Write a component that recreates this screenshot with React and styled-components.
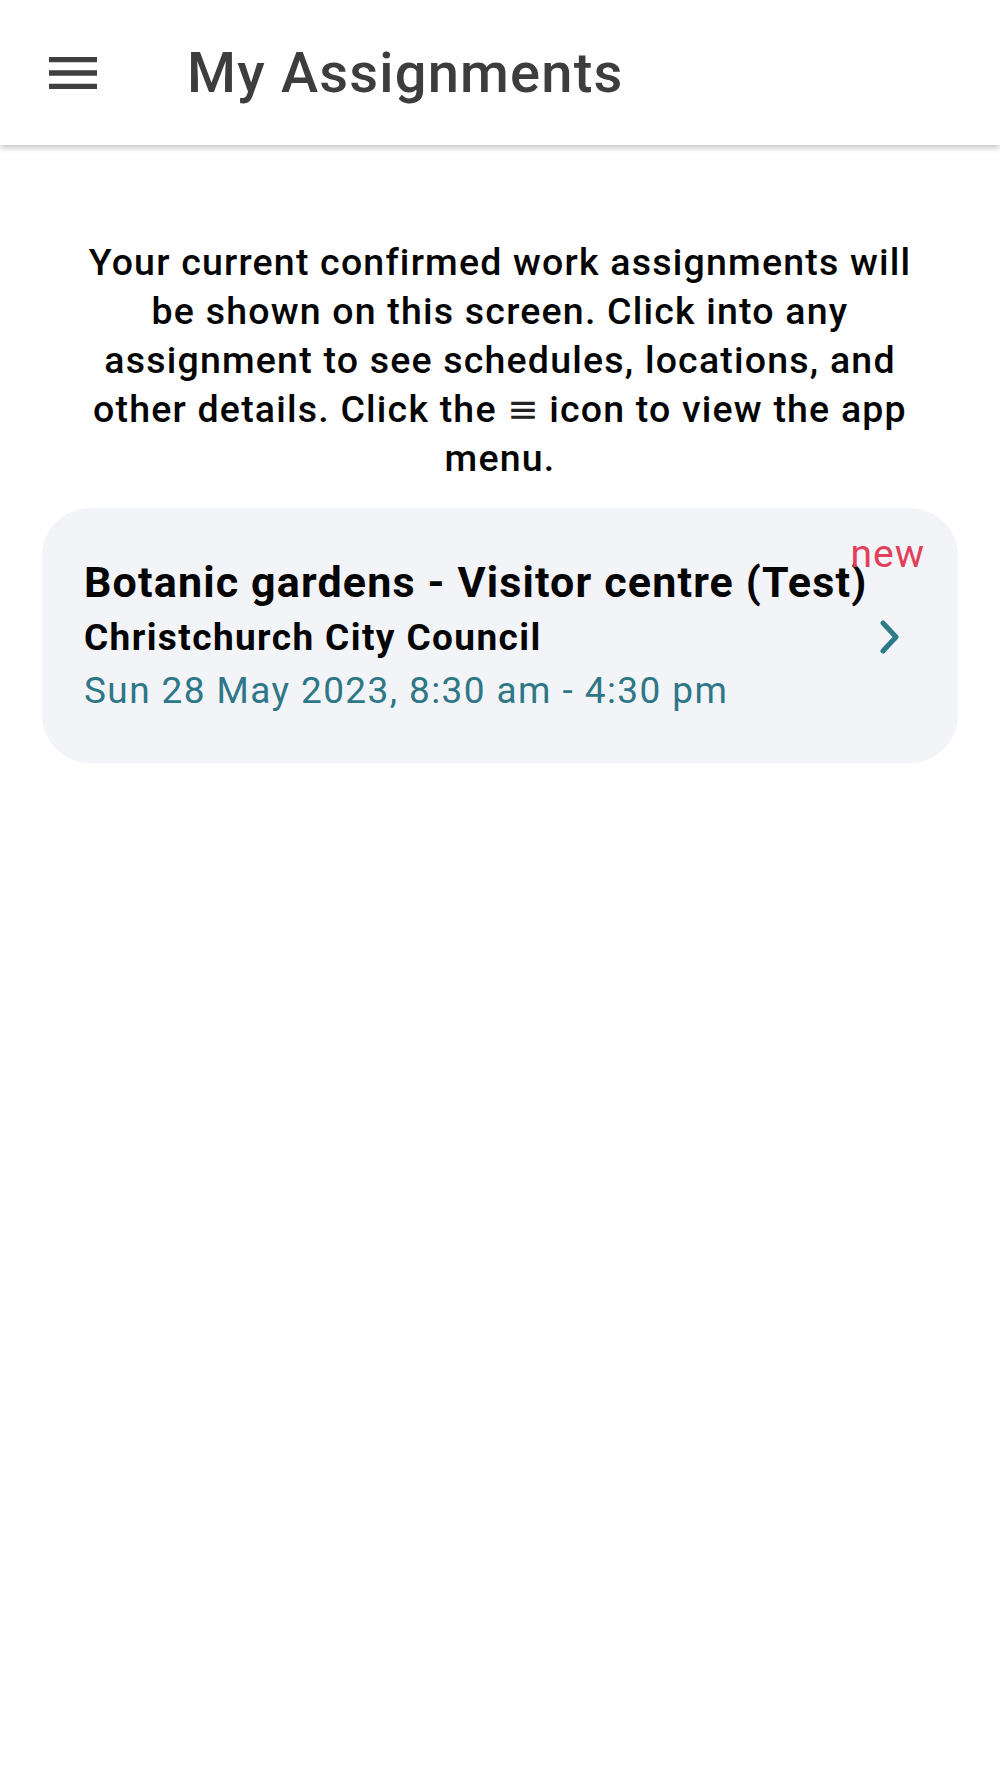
import React from "react";
import styled, { createGlobalStyle } from "styled-components";

const GlobalStyle = createGlobalStyle`
  html, body {
    margin: 0;
    padding: 0;
    background: #ffffff;
  }
  body {
    font-family: Roboto, "Noto Sans", "DejaVu Sans", sans-serif;
    -webkit-font-smoothing: antialiased;
  }
  * { box-sizing: border-box; }
`;

const Page = styled.div`
  min-height: 1778px;
  background: #ffffff;
  display: flex;
  flex-direction: column;
`;

const TopBar = styled.header`
  height: 145px;
  display: flex;
  align-items: center;
  gap: 82px;
  padding-left: 41px;
  background: #ffffff;
  box-shadow: 0 3px 6px rgba(0, 0, 0, 0.22);
  position: relative;
  z-index: 1;
`;

const MenuButton = styled.button`
  width: 64px;
  height: 64px;
  padding: 0;
  border: none;
  background: transparent;
  color: #3f3f3f;
  display: flex;
  align-items: center;
  justify-content: center;
  svg { display: block; }
`;

const Title = styled.h1`
  margin: 0;
  font-family: Roboto, "Noto Sans", sans-serif;
  font-size: 56px;
  font-weight: 500;
  color: #3d3d3d;
  line-height: normal;
  letter-spacing: 1.2px;
`;

const Intro = styled.p`
  margin: 93px 0 0;
  padding: 0 80px;
  text-align: center;
  font-family: Roboto, "Noto Sans", sans-serif;
  font-size: 37.5px;
  font-weight: 500;
  line-height: 49px;
  letter-spacing: 1.2px;
  color: #050505;
`;

const MenuGlyph = styled.span`
  font-family: "DejaVu Sans", sans-serif;
  font-weight: 400;
  letter-spacing: 0;
  color: #222;
`;

const Card = styled.div`
  position: relative;
  margin: 25px 42px 0;
  padding: 48px 36px 46px 42px;
  border-radius: 48px;
  background: #f3f4f8;
  display: flex;
  align-items: center;
`;

const CardBody = styled.div`
  flex: 1;
  min-width: 0;
  display: flex;
  flex-direction: column;
`;

const CardTitle = styled.div`
  font-size: 43px;
  font-weight: 700;
  line-height: 52px;
  letter-spacing: 1.15px;
  color: #050505;
  white-space: nowrap;
`;

const CardLine = styled.div`
  font-size: 37px;
  line-height: 52px;
  letter-spacing: 1.4px;
  font-weight: ${(p) => (p.$bold ? 700 : 400)};
  color: ${(p) => p.$color || "#050505"};
  margin-top: ${(p) => p.$mt || 0}px;
  white-space: nowrap;
`;

const NewBadge = styled.span`
  position: absolute;
  top: 27px;
  right: 33px;
  font-size: 39px;
  line-height: 1;
  font-weight: 400;
  letter-spacing: 1px;
  color: #e0405a;
`;

const Chevron = styled.div`
  width: 64px;
  height: 64px;
  flex: none;
  display: flex;
  align-items: center;
  justify-content: center;
  color: #2d7a88;
  svg { display: block; }
`;

export default function App() {
  return (
    <Page>
      <GlobalStyle />
      <TopBar>
        <MenuButton aria-label="menu">
          <svg width="64" height="64" viewBox="0 0 24 24" fill="currentColor">
            <path d="M3 18h18v-2H3v2zm0-5h18v-2H3v2zm0-7v2h18V6H3z" />
          </svg>
        </MenuButton>
        <Title>My Assignments</Title>
      </TopBar>
      <Intro>
        Your current confirmed work assignments will be shown on this screen.
        Click into any assignment to see schedules, locations, and other
        details. Click the <MenuGlyph>≡</MenuGlyph> icon to view the app menu.
      </Intro>
      <Card>
        <CardBody>
          <CardTitle>Botanic gardens - Visitor centre (Test)</CardTitle>
          <CardLine $bold $mt={4}>Christchurch City Council</CardLine>
          <CardLine $color="#2e7786" $mt={1}>
            Sun 28 May 2023, 8:30 am - 4:30 pm
          </CardLine>
        </CardBody>
        <Chevron>
          <svg width="20" height="34" viewBox="0 0 20 34" fill="none">
            <polyline
              points="3,3 16,17 3,31"
              stroke="currentColor"
              strokeWidth="5"
              strokeLinecap="round"
              strokeLinejoin="round"
            />
          </svg>
        </Chevron>
        <NewBadge>new</NewBadge>
      </Card>
    </Page>
  );
}
